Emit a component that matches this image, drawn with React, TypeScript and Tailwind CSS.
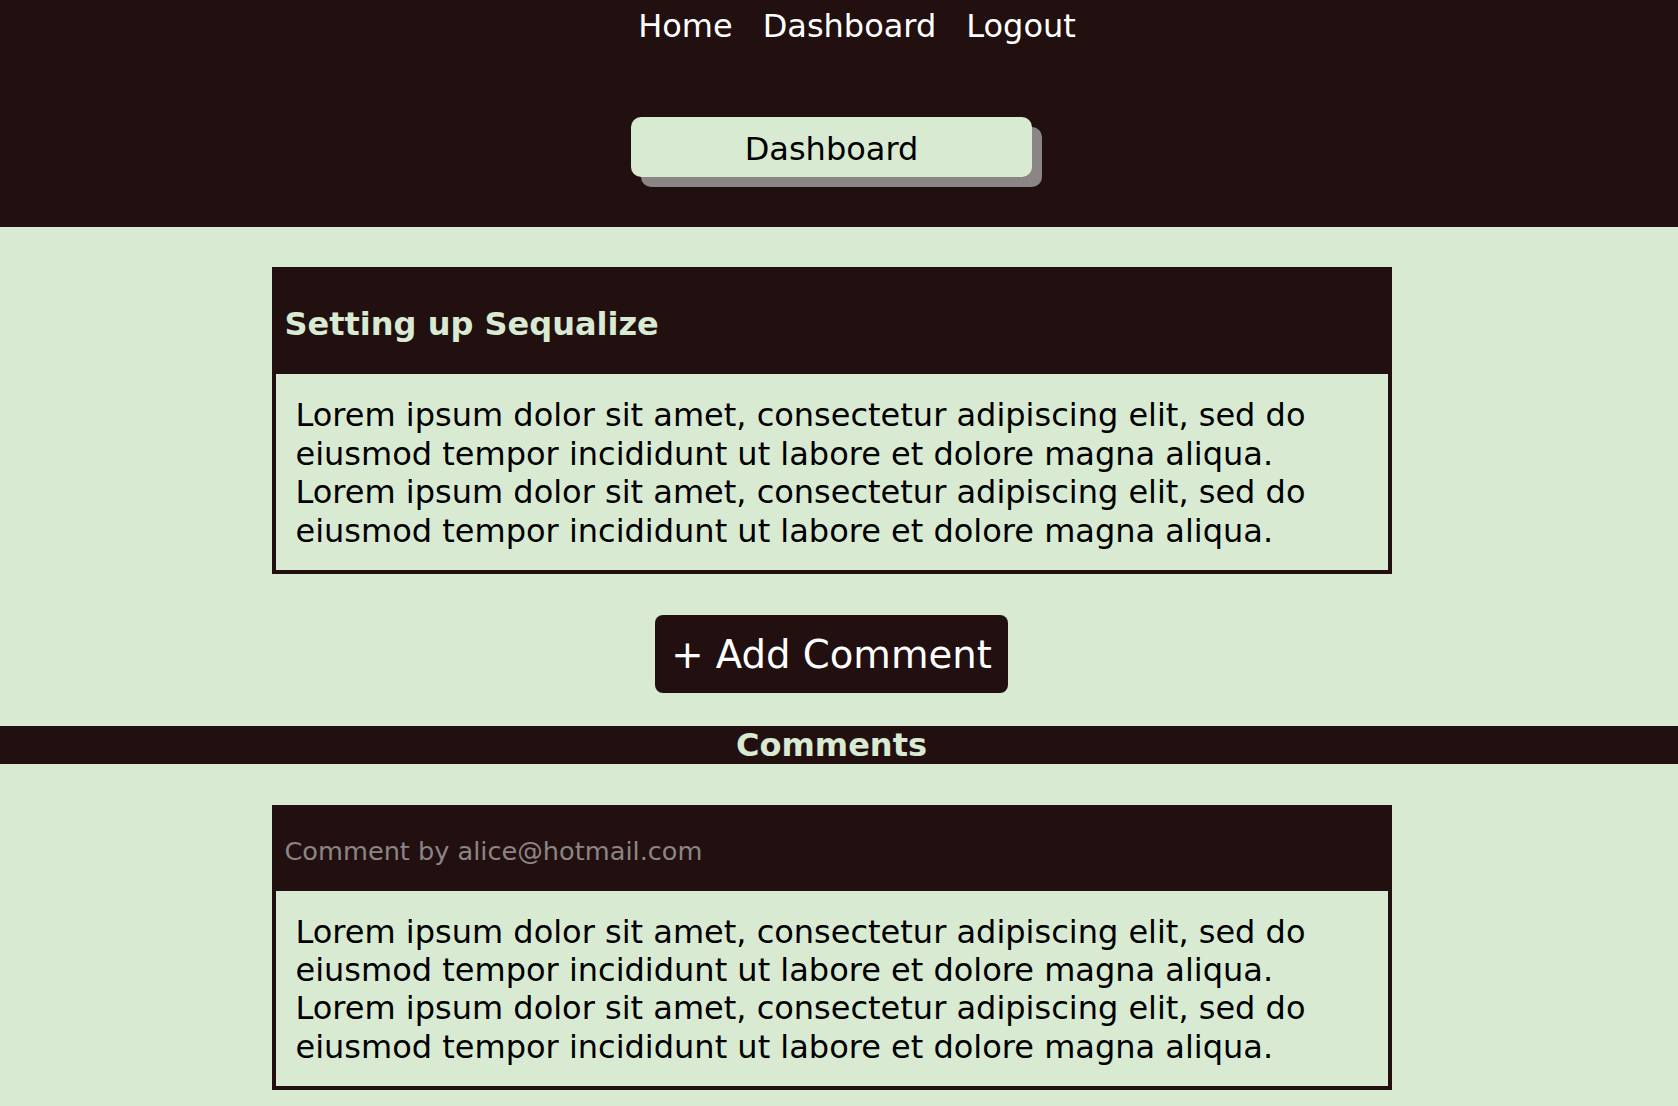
import React from "react";

const lorem =
  "Lorem ipsum dolor sit amet, consectetur adipiscing elit, sed do eiusmod tempor incididunt ut labore et dolore magna aliqua. Lorem ipsum dolor sit amet, consectetur adipiscing elit, sed do eiusmod tempor incididunt ut labore et dolore magna aliqua.";

function Card({ children, body }: { children: React.ReactNode; body: string }) {
  return (
    <div className="w-[1120px] border-4 border-[#221011]">
      {children}
      <p className="px-5 pt-[22px] pb-[20px] text-[32px] leading-[1.2] text-black">{body}</p>
    </div>
  );
}

export default function App() {
  return (
    <div
      className="min-h-screen bg-[#d9ead3]"
      style={{ fontFamily: '"DejaVu Sans", Verdana, sans-serif' }}
    >
      {/* header */}
      <header className="h-[227px] bg-[#221011]">
        <nav className="flex justify-center gap-[30px] pl-[36px] pt-[7px] text-[32px] leading-[38px] text-white">
          <a href="#">Home</a>
          <a href="#">Dashboard</a>
          <a href="#">Logout</a>
        </nav>
        <div className="mt-[72px] flex justify-center pr-[15px]">
          <div className="h-[60px] w-[401px] rounded-[10px] bg-[#d9ead3] pt-[13px] text-center text-[32px] leading-[1.2] text-black shadow-[10px_10px_0_#8b8586]">
            Dashboard
          </div>
        </div>
      </header>

      {/* post */}
      <main className="flex flex-col items-center pr-[15px] pt-[40px]">
        <Card body={lorem}>
          <h2 className="bg-[#221011] pl-[9px] pt-[34px] pb-[31px] text-[32px] font-bold leading-[1.2] text-[#d9ead3]">
            Setting up Sequalize
          </h2>
        </Card>

        <button className="mt-[41px] flex h-[78px] items-start rounded-lg bg-[#221011] px-4 pt-[17px] text-[38.6px] leading-[1.2] text-white">
          + Add Comment
        </button>
      </main>

      <div className="mt-[33px] h-[38px] bg-[#221011] pr-[15px] text-center text-[32px] font-bold leading-[38px] text-[#d9ead3]">
        Comments
      </div>

      <section className="flex flex-col items-center pr-[15px] pt-[41px] pb-[15px]">
        <Card body={lorem}>
          <div className="bg-[#221011] pl-[9px] pt-[27px] pb-[24px] text-[25.6px] leading-[1.2] text-[#8b8585]">
            Comment by alice@hotmail.com
          </div>
        </Card>
      </section>
    </div>
  );
}
